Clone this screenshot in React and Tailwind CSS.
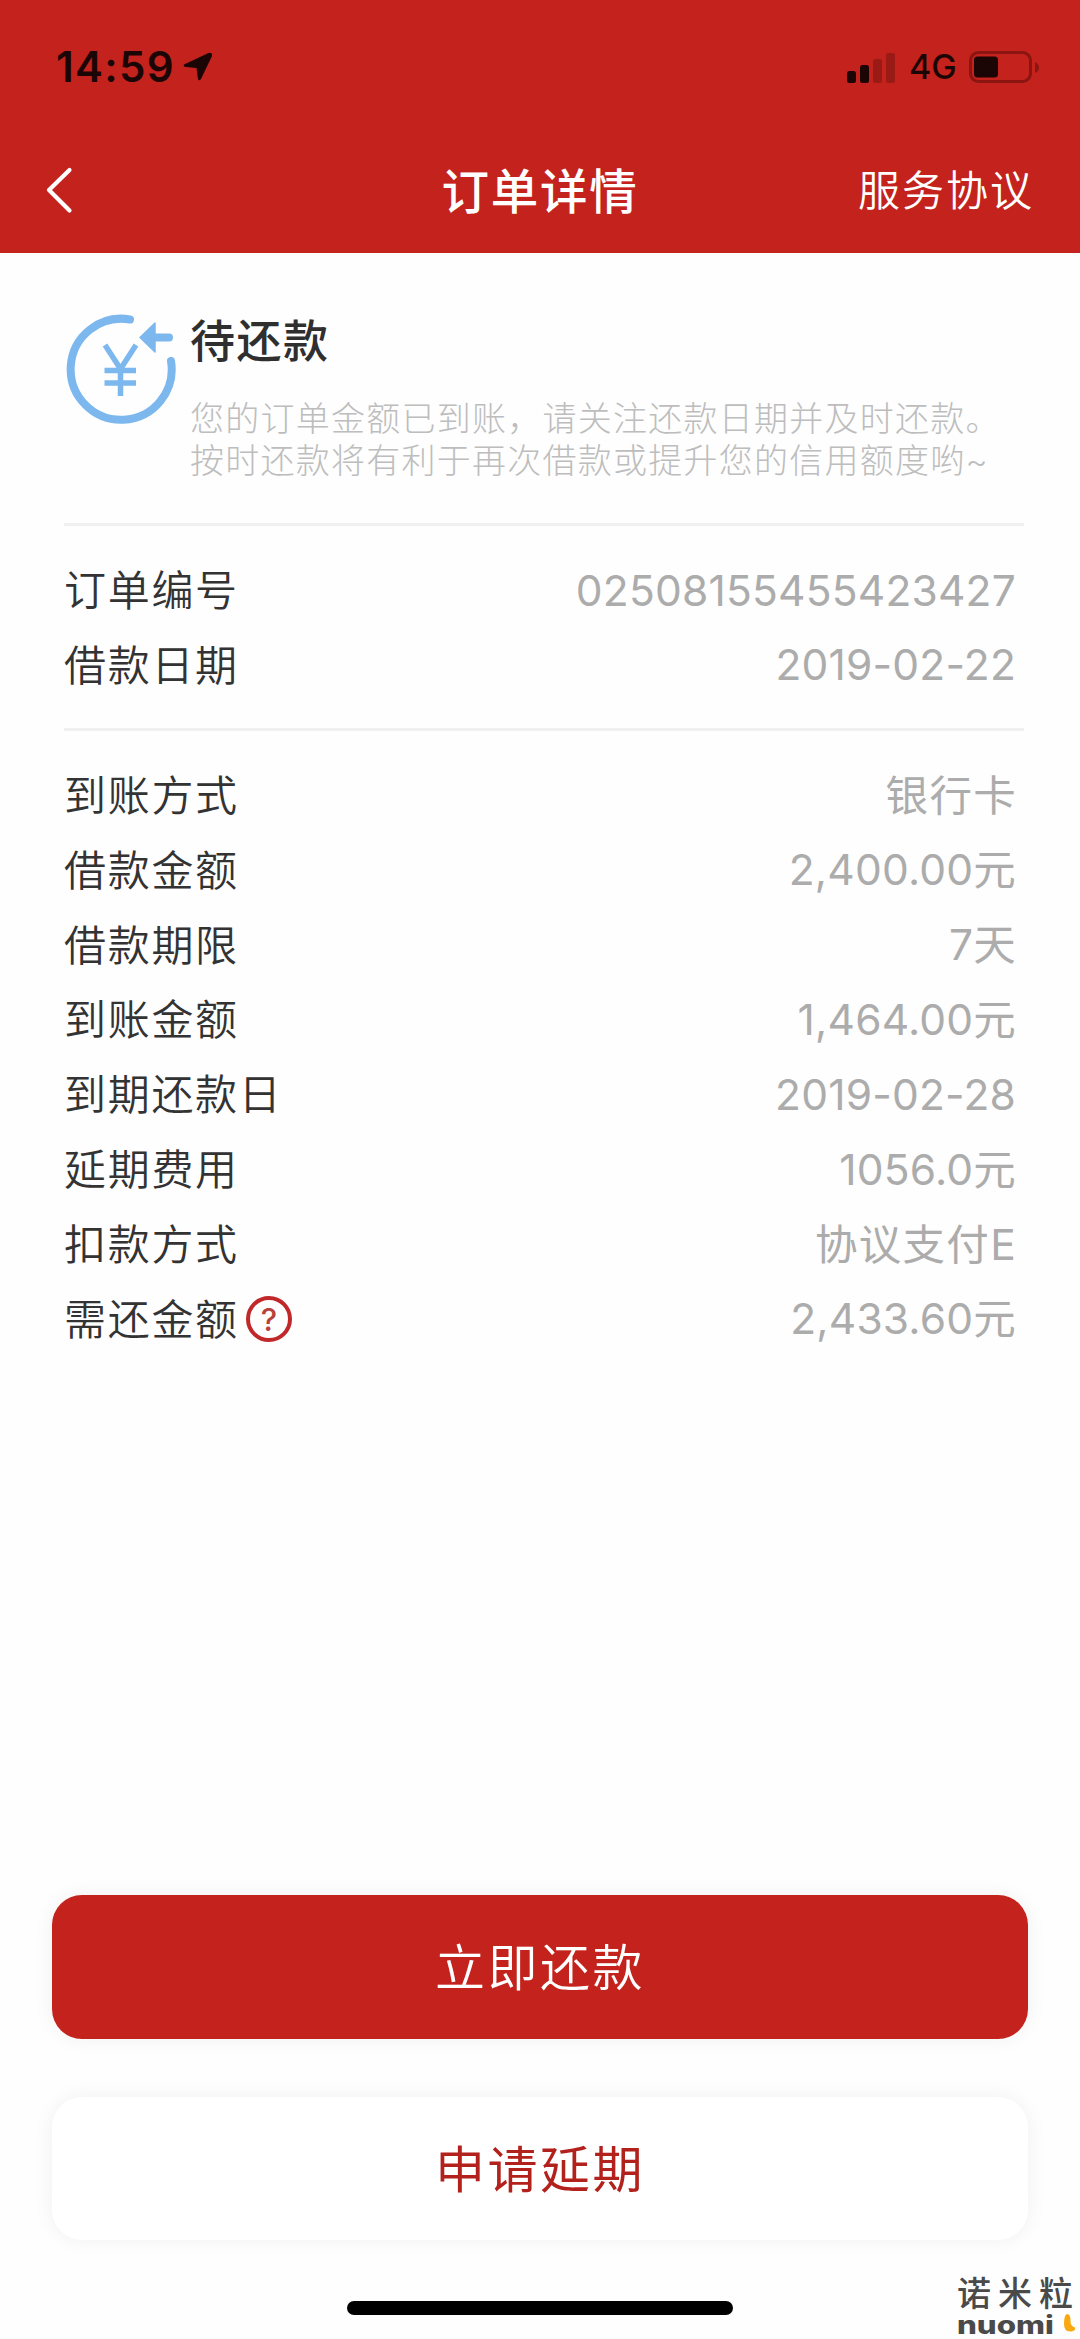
const CJK = "font-['Inter','Noto_Sans_CJK_SC',sans-serif]";

function StatusBar() {
  return (
    <div className="flex h-[128px] items-start justify-between pl-[56px] pr-[41px] pt-[46px] text-[#1c0505]">
      <div className="flex items-center gap-[9px]">
        <span className="w-[118px] whitespace-nowrap text-[42px] font-semibold leading-[42px] tracking-[1.300px]">14:59</span>
        <svg width="30" height="30" viewBox="0 0 30 30" fill="currentColor">
          <path d="M1 12.500 Q0 14.500 3 15 L13.500 16 L15 27 Q16 29.500 18 27 L29 4 Q29.500 0 25.500 1 Z" />
        </svg>
      </div>
      <div className="flex h-[42px] items-center">
        <svg width="52" height="32" viewBox="0 0 52 32" fill="currentColor">
          <rect x="1" y="20" width="9" height="12" rx="2.500" />
          <rect x="14" y="14" width="9" height="18" rx="2.500" />
          <rect x="27" y="8" width="9" height="24" rx="2.500" opacity="0.25" />
          <rect x="40" y="2" width="9" height="30" rx="2.500" opacity="0.25" />
        </svg>
        <span className="ml-[11px] w-[60px] text-[34px] font-medium leading-[42px]">4G</span>
        <svg width="70" height="32" viewBox="0 0 70 32" fill="none">
          <rect x="1.500" y="1.500" width="60" height="29" rx="8" stroke="#8c1512" strokeWidth="3" />
          <rect x="5" y="5.500" width="24" height="21" rx="3.500" fill="#1c0505" />
          <path d="M66 11 Q70 13 70 16.500 Q70 20 66 22 Z" fill="#8c1512" />
        </svg>
      </div>
    </div>
  );
}

function NavBar() {
  return (
    <div className="grid h-[125px] grid-cols-3 items-center px-[46px] text-white">
      <svg width="28" height="48" viewBox="0 0 28 48" fill="none" stroke="currentColor" strokeWidth="4.200" strokeLinecap="round" strokeLinejoin="round">
        <path d="M23.500 3 L3 23 L23.500 43.500" />
      </svg>
      <h1 className="whitespace-nowrap pt-[2px] text-center text-[47.500px] font-medium leading-[60px] tracking-[1.700px]">订单详情</h1>
      <span className="whitespace-nowrap pt-[1px] text-right text-[42px] font-[350] leading-[60px] tracking-[2px]">服务协议</span>
    </div>
  );
}

function RepayIcon() {
  return (
    <svg className="ml-[2px] mt-[61px] shrink-0" width="112" height="112" viewBox="0 0 112 112" fill="none" stroke="#7cb8ee" strokeLinecap="round">
      <path d="M64 5.500 A50.500 50.500 0 1 0 105 47" strokeWidth="8" />
      <path d="M86 23.500 H103" strokeWidth="8" />
      <path d="M74 23.500 L89 9 V38 Z" fill="#7cb8ee" strokeWidth="1.500" strokeLinejoin="round" />
      <path d="M39 31 L54.500 55 L70 31 M54.500 54 V82 M38.500 56.500 H70 M38.500 69 H70" strokeWidth="5.500" strokeLinecap="butt" />
    </svg>
  );
}

function Row({ label, value, help, wide }) {
  return (
    <div className="flex h-[74.850px] items-center justify-between">
      <span className="flex items-center text-[42px] font-[350] tracking-[1.700px] text-[#333333]">
        {label}
        {help && (
          <span className="ml-[7px] flex size-[46px] items-center justify-center rounded-full border-[4px] border-[#c0282a] text-[31px] font-medium leading-none tracking-normal text-[#b9413a]">
            ?
          </span>
        )}
      </span>
      <span className={`text-[42.500px] font-normal text-[#acacac] ${wide ? "mr-[-1px] tracking-[1.300px]" : "tracking-[0.200px]"}`}>{value}</span>
    </div>
  );
}

const order = [
  ["订单编号", "02508155455423427"],
  ["借款日期", "2019-02-22"],
];

const loan = [
  ["到账方式", "银行卡", true],
  ["借款金额", "2,400.00元"],
  ["借款期限", "7天"],
  ["到账金额", "1,464.00元"],
  ["到期还款日", "2019-02-28"],
  ["延期费用", "1056.0元"],
  ["扣款方式", "协议支付E", true],
];

function Watermark() {
  return (
    <div className="absolute bottom-0 right-0 w-[123px] text-[#4a4a4a]">
      <div className="whitespace-nowrap text-[34px] font-medium leading-[36px] tracking-[7px]">诺米粒</div>
      <div className="flex h-[27px] items-start pt-[2px]">
        <span className="w-[107px] shrink-0 origin-left scale-x-[1.250] text-[25px] font-extrabold leading-[22px]">nuomi</span>
        <svg className="shrink-0" width="12" height="18" viewBox="0 0 12 18" fill="#f8a912">
          <path d="M3 0 Q6.500 0 6.500 6 Q6 12 11 13.500 Q12 17 7 17.500 Q0 18 0 10 Q0 1 3 0 Z" />
        </svg>
      </div>
    </div>
  );
}

export default function App() {
  return (
    <div className={`relative flex h-[2339px] w-[1080px] flex-col overflow-hidden bg-[#fefefe] ${CJK}`} lang="zh-CN">
      <header className="h-[253px] shrink-0 bg-[#c4221d]">
        <StatusBar />
        <NavBar />
      </header>

      <main className="flex flex-col px-[64px]">
        <section className="flex h-[270px] gap-[12px]">
          <RepayIcon />
          <div className="pt-[57px]">
            <h2 className="text-[45px] font-medium leading-[64px] tracking-[1.500px] text-[#2f2f2f]">待还款</h2>
            <p className="mt-[24px] whitespace-nowrap text-[34px] font-light leading-[41.500px] tracking-[1.250px] text-[#bdbdbd]">
              您的订单金额已到账，请关注还款日期并及时还款。
              <br />
              按时还款将有利于再次借款或提升您的信用额度哟~
            </p>
          </div>
        </section>
        <hr className="mr-[-8px] h-[3px] border-0 bg-[#f0f0f0]" />
        <section className="h-[202px] pt-[27px]">
          {order.map(([l, v]) => <Row key={l} label={l} value={v} />)}
        </section>
        <hr className="mr-[-8px] h-[3px] border-0 bg-[#f0f0f0]" />
        <section className="pt-[27px]">
          {loan.map(([l, v, wide]) => <Row key={l} label={l} value={v} wide={wide} />)}
          <Row label="需还金额" value="2,433.60元" help />
        </section>
      </main>

      <footer className="mt-auto flex h-[444px] shrink-0 flex-col items-center px-[52px]">
        <button className="h-[144px] w-full shrink-0 rounded-[30px] bg-[#c4221d] pt-[3px] text-[50px] font-[350] tracking-[2.500px] text-white shadow-[0_0_20px_rgba(0,0,0,0.06)]">
          立即还款
        </button>
        <button className="mt-[58px] h-[143px] w-full shrink-0 rounded-[30px] bg-white pt-[3px] text-[50px] font-normal tracking-[2.500px] text-[#b3211d] shadow-[0_0_20px_rgba(0,0,0,0.06)]">
          申请延期
        </button>
        <div className="mt-[61px] h-[14px] w-[386px] rounded-full bg-black" />
      </footer>

      <Watermark />
    </div>
  );
}
